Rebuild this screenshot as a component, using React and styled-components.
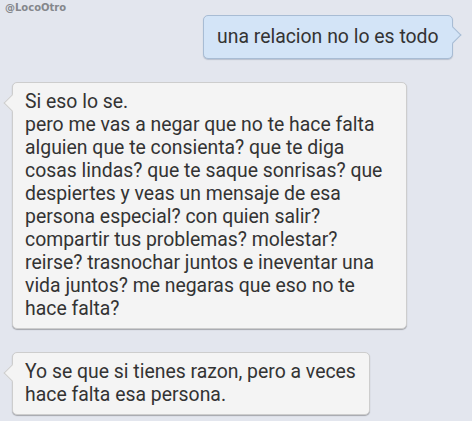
import React from "react";
import styled, { createGlobalStyle, css } from "styled-components";

const GlobalStyle = createGlobalStyle`
  html, body {
    margin: 0;
    padding: 0;
    background: #e3e6ee;
  }
  body {
    font-family: Roboto, "Noto Sans", sans-serif;
  }
`;

const Chat = styled.div`
  width: 472px;
  height: 421px;
  display: flex;
  flex-direction: column;
  overflow: hidden;
`;

const Handle = styled.div`
  padding: 1px 0 0 5px;
  height: 14px;
  font-family: "DejaVu Sans", sans-serif;
  font-weight: bold;
  font-size: 10px;
  line-height: 13px;
  color: #85878c;
`;

const Row = styled.div`
  display: flex;
  justify-content: ${(p) => (p.$mine ? "flex-end" : "flex-start")};
  padding: ${(p) => (p.$mine ? "0 19px 0 0" : "0 0 0 12px")};
  margin-top: ${(p) => p.$top}px;
`;

const Bubble = styled.div`
  position: relative;
  box-sizing: border-box;
  width: ${(p) => p.$width}px;
  border-radius: 5px;
  font-size: 19.4px;
  line-height: 23px;
  color: #333333;
  white-space: pre;

  &::before {
    content: "";
    position: absolute;
    width: 11px;
    height: 11px;
    transform: rotate(45deg);
  }

  ${(p) =>
    p.$mine
      ? css`
          padding: 9px 12px 10px 13px;
          background: #d3e4f7;
          border: 1px solid #a8bcd4;
          box-shadow: 0 1px 1px rgba(60, 80, 110, 0.25);
          &::before {
            right: -7px;
            top: 13px;
            background: #d3e4f7;
            border-top: 1px solid #a8bcd4;
            border-right: 1px solid #a8bcd4;
          }
        `
      : css`
          padding: 7px 12px 8px 12px;
          background: #f4f4f4;
          border: 1px solid #cdcdcd;
          box-shadow: 0 1px 1px rgba(0, 0, 0, 0.28);
          &::before {
            left: -7px;
            top: 14px;
            background: #f4f4f4;
            border-left: 1px solid #cdcdcd;
            border-bottom: 1px solid #cdcdcd;
          }
        `}
`;

const messages = [
  { mine: true, top: 0, width: 250, text: "una relacion no lo es todo" },
  {
    mine: false,
    top: 23,
    width: 395,
    text:
      "Si eso lo se.\npero me vas a negar que no te hace falta\nalguien que te consienta? que te diga\ncosas lindas? que te saque sonrisas? que\ndespiertes y veas un mensaje de esa\npersona especial? con quien salir?\ncompartir tus problemas? molestar?\nreirse? trasnochar juntos e ineventar una\nvida juntos? me negaras que eso no te\nhace falta?",
  },
  {
    mine: false,
    top: 23,
    width: 358,
    text: "Yo se que si tienes razon, pero a veces\nhace falta esa persona.",
  },
];

export default function App() {
  return (
    <>
      <GlobalStyle />
      <Chat>
        <Handle>@LocoOtro</Handle>
        {messages.map((m, i) => (
          <Row key={i} $mine={m.mine} $top={m.top}>
            <Bubble $mine={m.mine} $width={m.width}>
              {m.text}
            </Bubble>
          </Row>
        ))}
      </Chat>
    </>
  );
}
